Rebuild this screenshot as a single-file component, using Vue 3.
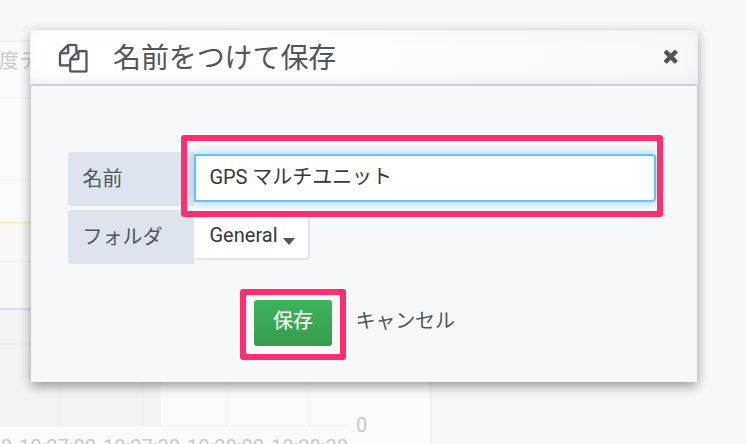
<script setup>
import { ref } from 'vue'

const name = ref('GPS マルチユニット')
const gridRows = [98.5, 180, 261.5, 344, 425.5]
const gridColumns = [58.5, 142.5, 226.5, 309.5]
const ticks = [
  { x: -26.5, label: '10:26:30' },
  { x: 57.5, label: '10:27:00' },
  { x: 141.5, label: '10:27:30' },
  { x: 225.5, label: '10:28:00' },
  { x: 309.5, label: '10:28:30' },
]
</script>

<template>
  <main class="page">
    <svg class="chart" viewBox="0 0 746 444" width="746" height="444">
      <rect x="-2" y="41" width="433" height="420" fill="#fafbfd" stroke="#eff1f3" stroke-width="2" />
      <rect x="0" y="223" width="161" height="86" fill="#faf8f6" />
      <rect x="0" y="310" width="161" height="116" fill="#f3f5f4" />
      <g stroke="#50555a" stroke-opacity="0.04" stroke-width="1.2">
        <line v-for="y in gridRows" :key="y" x1="0" x2="350" :y1="y" :y2="y" />
        <line v-for="x in gridColumns" :key="x" :x1="x" :x2="x" y1="98" y2="426" />
      </g>
      <path d="M0 222.8H161" stroke="#f9e7c6" stroke-width="1.6" />
      <path d="M0 309H161" stroke="#d3e1ee" stroke-width="2" />
      <text class="faint" x="-1" y="68">度テ</text>
      <text class="faint" x="356" y="432">0</text>
      <text v-for="t in ticks" :key="t.label" class="faint" :x="t.x" y="453.5" text-anchor="middle">{{ t.label }}</text>
    </svg>

    <section class="modal" role="dialog">
      <header class="modal-header">
        <svg class="copy" viewBox="0 0 1792 1792" width="28.5" height="28.5">
          <path fill="#52545c" stroke="#52545c" stroke-width="14" d="M1696 384q40 0 68 28t28 68v1216q0 40-28 68t-68 28h-960q-40 0-68-28t-28-68v-288h-544q-40 0-68-28t-28-68v-672q0-40 20-88t48-76l408-408q28-28 76-48t88-20h416q40 0 68 28t28 68v328q68-40 128-40h416zm-544 213l-299 299h299v-299zm-640-384l-299 299h299v-299zm196 647l316-316v-416h-384v416q0 40-28 68t-68 28h-416v640h512v-256q0-40 20-88t48-76zm956 804v-1152h-384v416q0 40-28 68t-68 28h-416v640h896z" />
        </svg>
        <h1>名前をつけて保存</h1>
        <svg class="close" viewBox="302 366 1188 1188" width="13.5" height="13.5">
          <path fill="#52545c" d="M1490 1322q0 40-28 68l-136 136q-28 28-68 28t-68-28l-294-294-294 294q-28 28-68 28t-68-28l-136-136q-28-28-28-68t28-68l294-294-294-294q-28-28-28-68t28-68l136-136q28-28 68-28t68 28l294 294 294-294q28-28 68-28t68 28l136 136q28 28 28 68t-28 68l-294 294 294 294q28 28 28 68z" />
        </svg>
      </header>
      <form class="modal-body" @submit.prevent>
        <div class="row">
          <label for="dash-name">名前</label>
          <input id="dash-name" v-model="name" type="text" />
        </div>
        <div class="row">
          <label>フォルダ</label>
          <div class="select"><span>General</span><i class="caret"></i></div>
        </div>
        <div class="actions">
          <button type="submit">保存</button>
          <a>キャンセル</a>
        </div>
      </form>
    </section>
    <div class="marker marker-name"></div>
    <div class="marker marker-save"></div>
  </main>
</template>

<style>
body {
  margin: 0;
  overflow: hidden;
}
</style>

<style scoped>
.page {
  position: relative;
  box-sizing: border-box;
  width: 746px;
  height: 444px;
  padding: 30px 48px 0 30px;
  overflow: hidden;
  background: #f7f8fa;
  font: 20px/30px Roboto, "Noto Sans CJK JP", sans-serif;
  color: #52545c;
}
.chart {
  position: absolute;
  left: 0;
  top: 0;
}
.faint {
  fill: #c7c9cb;
  font-size: 20px;
}
.modal {
  position: relative;
  height: 352px;
}
.modal::before {
  content: "";
  position: absolute;
  inset: 0 1px;
  box-shadow: 0 4px 11px rgba(0, 0, 0, 0.4);
}
.modal-header {
  position: relative;
  box-sizing: border-box;
  display: flex;
  align-items: center;
  height: 56px;
  padding: 0 20.5px 0 28.5px;
  border-bottom: 2px solid #c7d0de;
  background: linear-gradient(90deg, #fff, #fefefe 48%, #f9fafc 70%, #f7f8fa);
  box-shadow: inset 0 -5px 14px -4px rgba(199, 208, 222, 0.25), inset 0 0 14px rgba(205, 210, 218, 0.15);
}
.copy {
  flex: none;
  margin-top: 2px;
  overflow: visible;
}
h1 {
  flex: 1;
  margin: 3px 0 0 26px;
  font-size: 28px;
  font-weight: 400;
  line-height: 54px;
  letter-spacing: -0.1px;
}
.close {
  flex: none;
  margin-top: 0;
}
.modal-body {
  position: relative;
  box-sizing: border-box;
  display: flex;
  flex-direction: column;
  gap: 4px;
  height: 296px;
  margin: 0 1px;
  padding: 66px 41px 0 37px;
  background: #f7f8fa;
}
.row {
  display: flex;
  height: 54px;
}
label {
  box-sizing: border-box;
  width: 126px;
  flex: none;
  padding-left: 14.5px;
  border-radius: 4px 0 0 4px;
  background: #dde4ed;
  line-height: 54px;
}
input {
  box-sizing: border-box;
  width: 462px;
  height: 48px;
  margin: 2px 0 0;
  padding: 0 13.5px 5px;
  border: 2px solid #66c3f0;
  border-radius: 0 4px 4px 0;
  outline: none;
  background: #fff;
  box-shadow: inset 0 2px 2px rgba(0, 0, 0, 0.04), 0 0 10px #8fd0f3;
  font: inherit;
  letter-spacing: -0.06px;
  color: #35373b;
}
.select {
  box-sizing: border-box;
  display: flex;
  width: 116px;
  height: 50px;
  padding: 0 0 0 13.5px;
  border: 2px solid #dde4ed;
  border-top: 0;
  border-left-color: #fff;
  border-radius: 0 4px 4px 0;
  background: #fff;
  line-height: 50px;
  color: #35373b;
}
.caret {
  width: 0;
  height: 0;
  margin: 28px 0 0 5px;
  border: 6px solid transparent;
  border-top: 7px solid #52545c;
  border-bottom: 0;
}
.actions {
  display: flex;
  gap: 23.5px;
  margin: 32px 0 0 186px;
}
button {
  width: 78px;
  height: 46px;
  padding: 0 0 4px;
  border: 0;
  border-radius: 3px;
  background: linear-gradient(#3eb35c, #389b50);
  font: inherit;
  -webkit-text-stroke: 0.15px #fff;
  color: #fff;
}
.actions a {
  line-height: 42px;
  letter-spacing: -0.15px;
}
.marker {
  position: absolute;
  box-sizing: border-box;
  border: 6px solid #ff2e6e;
  border-radius: 3px;
}
.marker-name {
  left: 180.5px;
  top: 134.5px;
  width: 482.5px;
  height: 82.5px;
}
.marker-save {
  left: 239.5px;
  top: 289px;
  width: 106.5px;
  height: 70.5px;
}
</style>
